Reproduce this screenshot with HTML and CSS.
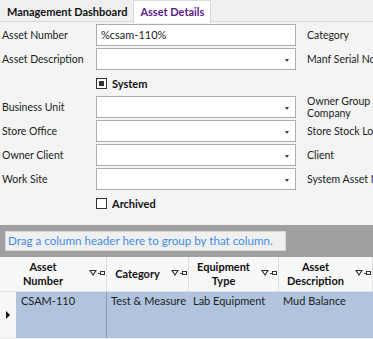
FILE: index.html
```html
<!DOCTYPE html>
<html lang="en">
<head>
    <meta charset="UTF-8">
    <title>Asset Details</title>
    <link rel="stylesheet" href="styles.css">
</head>
<body>
    <div class="tabs">
        <div class="tab">Management Dashboard</div>
        <div class="tab active">Asset Details</div>
    </div>
    <div class="form">
        <div class="row">
            <label>Asset Number</label>
            <div class="field">%csam-110%</div>
            <span class="side">Category</span>
        </div>
        <div class="row">
            <label>Asset Description</label>
            <div class="field combo"></div>
            <span class="side">Manf Serial No</span>
        </div>
        <div class="row">
            <label></label>
            <div class="check"><span class="box filled"></span>System</div>
        </div>
        <div class="row">
            <label>Business Unit</label>
            <div class="field combo"></div>
            <span class="side two">Owner Group<br>Company</span>
        </div>
        <div class="row">
            <label>Store Office</label>
            <div class="field combo"></div>
            <span class="side">Store Stock Location</span>
        </div>
        <div class="row">
            <label>Owner Client</label>
            <div class="field combo"></div>
            <span class="side">Client</span>
        </div>
        <div class="row">
            <label>Work Site</label>
            <div class="field combo"></div>
            <span class="side">System Asset Number</span>
        </div>
        <div class="row">
            <label></label>
            <div class="check"><span class="box"></span>Archived</div>
        </div>
    </div>
    <div class="grid">
        <div class="group-panel">
            <span>Drag a column header here to group by that column.</span>
        </div>
        <div class="grid-head">
            <div class="hcell c1"><span>Asset<br>Number</span><i class="icons"></i></div>
            <div class="hcell c2"><span>Category</span><i class="icons"></i></div>
            <div class="hcell c3"><span>Equipment<br>Type</span><i class="icons"></i></div>
            <div class="hcell c4"><span>Asset<br>Description</span><i class="icons"></i></div>
        </div>
        <div class="grid-row">
            <div class="indicator"><span class="arrow"></span></div>
            <div class="cell c1x">CSAM-110</div>
            <div class="cell c2">Test &amp; Measure</div>
            <div class="cell c3">Lab Equipment</div>
            <div class="cell c4">Mud Balance</div>
        </div>
    </div>
</body>
</html>
```

FILE: styles.css
```css
body {
    margin: 0;
    width: 373px;
    height: 339px;
    overflow: hidden;
    background: #f4f4f4;
    font-family: 'Lato', sans-serif;
    font-size: 10.5px;
    color: #222;
}
.tabs {
    display: flex;
    height: 21px;
    border-bottom: 1px solid #d9d9d9;
    background: #f0f0f0;
    padding-left: 1px;
    font-size: 11px;
}
.tab {
    padding: 0 6px;
    font-weight: bold;
    color: #111;
    margin-top: 2px;
    line-height: 19px;
    white-space: nowrap;
}
.tab.active {
    background: #fff;
    color: #5b1a8f;
    border: 1px solid #d9d9d9;
    border-bottom: none;
    margin-top: 0;
    line-height: 21px;
    height: 22px;
}
.form {
    display: flex;
    flex-direction: column;
    gap: 2px;
    padding-top: 2px;
}
.row {
    display: flex;
    align-items: center;
    height: 22px;
    white-space: nowrap;
}
.row label {
    flex-shrink: 0;
    width: 96px;
    padding-left: 2px;
    box-sizing: border-box;
}
.field {
    flex-shrink: 0;
    width: 200px;
    height: 22px;
    box-sizing: border-box;
    border: 1px solid #acacac;
    background: #fff;
    padding-left: 4px;
    line-height: 20px;
    font-size: 11px;
    position: relative;
}
.combo::after {
    content: '';
    position: absolute;
    right: 6px;
    top: 10px;
    border-left: 2.5px solid transparent;
    border-right: 2.5px solid transparent;
    border-top: 3px solid #444;
}
.side {
    margin-left: 11px;
}
.side.two {
    line-height: 12px;
}
.check {
    display: flex;
    align-items: center;
    font-weight: bold;
    font-size: 11px;
    gap: 5px;
    color: #111;
}
.box {
    width: 11px;
    height: 11px;
    border: 1px solid #333;
    background: #fff;
    box-sizing: border-box;
    position: relative;
}
.box.filled::after {
    content: '';
    position: absolute;
    left: 2px;
    top: 2px;
    width: 5px;
    height: 5px;
    background: #333;
}
.grid {
    margin-top: 11px;
    background: #a0a0a0;
    padding-top: 6px;
    font-size: 11px;
}
.group-panel {
    margin-left: 5px;
    width: 281px;
    height: 20px;
    background: #f0f0f0;
    box-sizing: border-box;
    border: 1px solid #d8d8d8;
    color: #3d8ee8;
    padding-left: 2px;
    line-height: 18px;
    font-size: 11.6px;
    white-space: nowrap;
    overflow: hidden;
}
.grid-head {
    margin-top: 6px;
    display: flex;
    height: 34px;
    background: #f8f8f8;
    border-bottom: 1px solid #e2e2e2;
}
.hcell {
    display: flex;
    align-items: center;
    border-right: 1px solid #e0e0e0;
    font-weight: bold;
    text-align: center;
    line-height: 14px;
    color: #111;
    box-sizing: border-box;
}
.hcell span {
    flex: 1;
}
.hcell .icons {
    width: 20px;
    height: 12px;
    flex-shrink: 0;
    background:
        linear-gradient(#333, #333) 14px 3px / 1px 4px no-repeat,
        linear-gradient(#333, #333) 12px 5px / 3px 1px no-repeat,
        linear-gradient(#333, #333) 15px 3px / 4px 1px no-repeat,
        linear-gradient(#333, #333) 15px 6px / 4px 1px no-repeat,
        linear-gradient(#333, #333) 18px 3px / 1px 4px no-repeat;
    position: relative;
}
.hcell .icons::before {
    content: '';
    position: absolute;
    left: 3px;
    top: 2px;
    border-left: 4px solid transparent;
    border-right: 4px solid transparent;
    border-top: 6px solid #333;
}
.hcell .icons::after {
    content: '';
    position: absolute;
    left: 5px;
    top: 3px;
    border-left: 2px solid transparent;
    border-right: 2px solid transparent;
    border-top: 3px solid #f8f8f8;
}
.c1 { width: 107px; }
.c2 { width: 82px; }
.c3 { width: 90px; }
.c4 { width: 94px; }
.grid-row {
    display: flex;
    height: 46px;
    background: #b0c4de;
    border-bottom: 2px solid #ececec;
}
.indicator {
    width: 16px;
    flex-shrink: 0;
    background: #f6f6f6;
    display: flex;
    align-items: center;
    justify-content: center;
}
.arrow {
    border-top: 4px solid transparent;
    border-bottom: 4px solid transparent;
    border-left: 4px solid #111;
}
.cell {
    flex-shrink: 0;
    padding: 2px 4px;
    box-sizing: border-box;
    color: #222;
    white-space: nowrap;
    overflow: hidden;
}
.c1x {
    width: 91px;
    padding-left: 5px;
    border-right: 1px solid #8c9aae;
}
```
